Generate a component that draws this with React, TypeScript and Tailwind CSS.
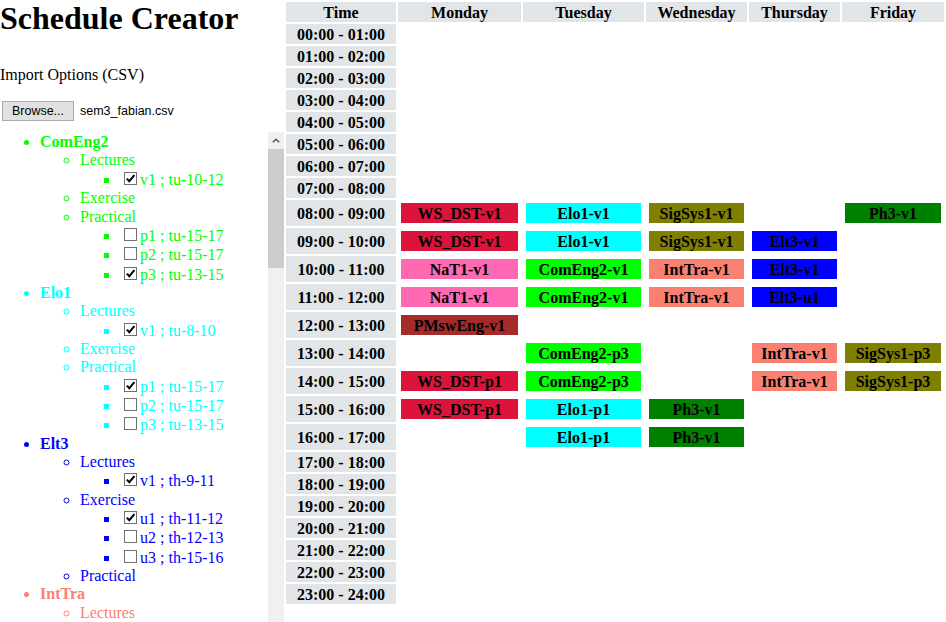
import React from "react";

type Slot = { label: string; color: string } | null;

const days = ["Monday", "Tuesday", "Wednesday", "Thursday", "Friday"];

const C = {
  wsdst: "bg-[#dc143c]",
  elo: "bg-[#00ffff]",
  sig: "bg-[#808000]",
  ph: "bg-[#008000]",
  elt: "bg-[#0000ff]",
  nat: "bg-[#ff69b4]",
  com: "bg-[#00ff00]",
  intra: "bg-[#fa8072]",
  pm: "bg-[#a52a2a]",
};

const s = (label: string, color: string): Slot => ({ label, color });

// hour -> [mon, tue, wed, thu, fri]
const schedule: Record<number, Slot[]> = {
  8: [s("WS_DST-v1", C.wsdst), s("Elo1-v1", C.elo), s("SigSys1-v1", C.sig), null, s("Ph3-v1", C.ph)],
  9: [s("WS_DST-v1", C.wsdst), s("Elo1-v1", C.elo), s("SigSys1-v1", C.sig), s("Elt3-v1", C.elt), null],
  10: [s("NaT1-v1", C.nat), s("ComEng2-v1", C.com), s("IntTra-v1", C.intra), s("Elt3-v1", C.elt), null],
  11: [s("NaT1-v1", C.nat), s("ComEng2-v1", C.com), s("IntTra-v1", C.intra), s("Elt3-u1", C.elt), null],
  12: [s("PMswEng-v1", C.pm), null, null, null, null],
  13: [null, s("ComEng2-p3", C.com), null, s("IntTra-v1", C.intra), s("SigSys1-p3", C.sig)],
  14: [s("WS_DST-p1", C.wsdst), s("ComEng2-p3", C.com), null, s("IntTra-v1", C.intra), s("SigSys1-p3", C.sig)],
  15: [s("WS_DST-p1", C.wsdst), s("Elo1-p1", C.elo), s("Ph3-v1", C.ph), null, null],
  16: [null, s("Elo1-p1", C.elo), s("Ph3-v1", C.ph), null, null],
};

const pad = (n: number) => (n < 10 ? "0" + n : "" + n);

type Item = { label: string; checked: boolean };
type Course = {
  name: string;
  color: string;
  lectures: Item[];
  exercise: Item[];
  practical: Item[];
};

const courses: Course[] = [
  {
    name: "ComEng2",
    color: "text-[#00ff00]",
    lectures: [{ label: "v1 ; tu-10-12", checked: true }],
    exercise: [],
    practical: [
      { label: "p1 ; tu-15-17", checked: false },
      { label: "p2 ; tu-15-17", checked: false },
      { label: "p3 ; tu-13-15", checked: true },
    ],
  },
  {
    name: "Elo1",
    color: "text-[#00ffff]",
    lectures: [{ label: "v1 ; tu-8-10", checked: true }],
    exercise: [],
    practical: [
      { label: "p1 ; tu-15-17", checked: true },
      { label: "p2 ; tu-15-17", checked: false },
      { label: "p3 ; tu-13-15", checked: false },
    ],
  },
  {
    name: "Elt3",
    color: "text-[#0000ff]",
    lectures: [{ label: "v1 ; th-9-11", checked: true }],
    exercise: [
      { label: "u1 ; th-11-12", checked: true },
      { label: "u2 ; th-12-13", checked: false },
      { label: "u3 ; th-15-16", checked: false },
    ],
    practical: [],
  },
  {
    name: "IntTra",
    color: "text-[#fa8072]",
    lectures: [
      { label: "v1 ; we-10-12", checked: true },
      { label: "v1 ; th-13-15", checked: true },
    ],
    exercise: [],
    practical: [],
  },
];

function Checkbox({ checked }: { checked: boolean }) {
  return (
    <span className="inline-block overflow-hidden align-baseline w-[13px] h-[13px] ml-[4px] mr-[3px] border border-[#707070] bg-white relative">
      {checked && (
        <svg viewBox="0 0 11 11" className="absolute inset-0 w-[11px] h-[11px]">
          <path d="M1.8 5.6 L4.3 8.2 L9.4 2.2" fill="none" stroke="#000" strokeWidth="2" />
        </svg>
      )}
    </span>
  );
}

function Group({ title, items }: { title: string; items: Item[] }) {
  return (
    <li>
      {title}
      {items.length > 0 && (
        <ul className="list-[square] pl-[40px]">
          {items.map((it, i) => (
            <li key={i} className="leading-[19.3px]">
              <Checkbox checked={it.checked} />
              {it.label}
            </li>
          ))}
        </ul>
      )}
    </li>
  );
}

function Scrollbar() {
  return (
    <div className="w-[16px] shrink-0 bg-[#f0f0f0] flex flex-col">
      <div className="h-[17px] flex items-center justify-center">
        <svg viewBox="0 0 8 5" className="w-[8px] h-[5px]">
          <path d="M0.8 4.3 L4 1.2 L7.2 4.3" fill="none" stroke="#505050" strokeWidth="1.4" />
        </svg>
      </div>
      <div className="h-[119px] bg-[#cdcdcd]" />
    </div>
  );
}

function Sidebar() {
  return (
    <div className="w-[284px] shrink-0">
      <h1 className="text-[32px] font-bold leading-[37px]">Schedule Creator</h1>
      <p className="mt-[29px] text-[16px] leading-[18px]">Import Options (CSV)</p>
      <div className="mt-[17px] h-[20px] flex items-center font-['Liberation_Sans',sans-serif] text-[12.5px]">
        <button className="ml-[2px] w-[72px] h-[20px] bg-[#e1e1e1] border border-[#adadad] text-black text-[12.5px]">
          Browse...
        </button>
        <span className="ml-[6px]">sem3_fabian.csv</span>
      </div>
      <div className="mt-[11px] h-[490px] flex">
        <div className="flex-1 overflow-hidden pt-px text-[16px] leading-[18.4px]">
          <ul className="list-disc pl-[40px]">
            {courses.map((c) => (
              <li key={c.name} className={c.color}>
                <span className="font-bold">{c.name}</span>
                <ul className="list-[circle] pl-[40px]">
                  <Group title="Lectures" items={c.lectures} />
                  <Group title="Exercise" items={c.exercise} />
                  <Group title="Practical" items={c.practical} />
                </ul>
              </li>
            ))}
          </ul>
        </div>
        <Scrollbar />
      </div>
    </div>
  );
}

function Timetable() {
  const hours = Array.from({ length: 24 }, (_, i) => i);
  return (
    <div className="w-[662px] shrink-0 p-[2px] grid grid-cols-[110px_123px_121px_101px_91px_102px] gap-[2px] content-start text-[16px] font-bold leading-[16px]">
      <div className="h-[20px] pt-[2px] bg-[#e1e5e8] flex items-center justify-center">Time</div>
      {days.map((d) => (
        <div key={d} className="h-[20px] pt-[2px] bg-[#e1e5e8] flex items-center justify-center">
          {d}
        </div>
      ))}
      {hours.map((h) => {
        const row = schedule[h] || [null, null, null, null, null];
        return (
          <React.Fragment key={h}>
            <div className="min-h-[20px] pt-[2px] bg-[#e1e5e8] flex items-center justify-center">
              {pad(h)}:00 - {pad(h + 1)}:00
            </div>
            {row.map((slot, i) =>
              slot ? (
                <div key={i} className="p-[3px]">
                  <div className={`h-[20px] pt-[2px] flex items-center justify-center text-black ${slot.color}`}>
                    {slot.label}
                  </div>
                </div>
              ) : (
                <div key={i} />
              )
            )}
          </React.Fragment>
        );
      })}
    </div>
  );
}

export default function App() {
  return (
    <div className="w-[946px] h-[622px] overflow-hidden flex bg-white text-black font-['Liberation_Serif',serif]">
      <Sidebar />
      <Timetable />
    </div>
  );
}
